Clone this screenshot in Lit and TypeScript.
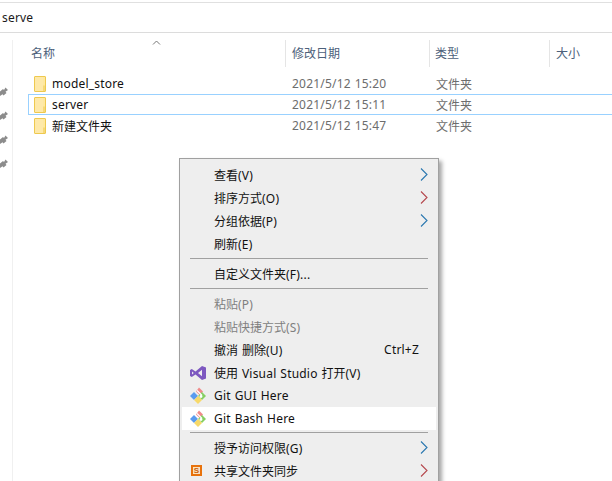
import { LitElement, html, css, svg } from "lit";
import { customElement } from "lit/decorators.js";

const folder = html`<svg class="folder" width="12" height="16" viewBox="0 0 12 16">
  <rect x="0.5" y="0.5" width="11" height="15" rx="0.5" fill="#ffe89e" stroke="#eec94f"/>
  <rect x="1" y="1" width="8" height="14" fill="#fee9a9"/>
  <path d="M10 9.5V15" stroke="#eec94f" fill="none"/>
</svg>`;

const pin = html`<svg class="pin" width="8" height="9" viewBox="0 0 8 9">
  <path d="M0 4.5 L3 2 L4 3 L5.5 0.5 L8 3 L5.5 4.8 L6.5 6 L3.5 8.5 L2.5 7.2 L0 9Z" fill="#8c8c8c"/>
</svg>`;

const vs = svg`<svg width="18" height="18" viewBox="0 0 18 18">
  <path d="M13 2 L17 3.5 V14.5 L13 16 L6.5 10.5 L2.8 13 L1 12 V6 L2.8 5 L6.5 7.5Z M13 5.8 L9 9 L13 12.2Z M3 7.5 V10.5 L4.8 9Z" fill="#7d58c0" fill-rule="evenodd"/>
</svg>`;

const git = svg`<svg width="18" height="18" viewBox="0 0 18 18">
  <path d="M5 5 L9 9 L5 13 L1 9Z" fill="#5a9bee"/>
  <path d="M9 1 L13 5 L10 9 L6 5Z" fill="#f08a8a" transform="translate(1 -0.5)"/>
  <path d="M13 5 L17 9 L13 13 L9 9Z" fill="#86cf62"/>
  <path d="M9 9 L13 13 L9 17 L5 13Z" fill="#f7d96a"/>
  <path d="M8 3.5 L13 8.5" stroke="#fff" stroke-width="1.2"/>
  <circle cx="12" cy="9.5" r="1.4" fill="#fff"/>
</svg>`;

type Item = {
  label?: string;
  sep?: boolean;
  tight?: boolean;
  off?: boolean;
  hot?: boolean;
  arrow?: string;
  key?: string;
  icon?: unknown;
};

const items: Item[] = [
  { label: "查看(V)", arrow: "#2b78b0" },
  { label: "排序方式(O)", arrow: "#b5484e" },
  { label: "分组依据(P)", arrow: "#2b78b0" },
  { label: "刷新(E)" },
  { sep: true },
  { label: "自定义文件夹(F)..." },
  { sep: true },
  { label: "粘贴(P)", off: true },
  { label: "粘贴快捷方式(S)", off: true },
  { label: "撤消 删除(U)", key: "Ctrl+Z" },
  { label: "使用 Visual Studio 打开(V)", icon: vs },
  { label: "Git GUI Here", icon: git },
  { label: "Git Bash Here", icon: git, hot: true },
  { sep: true, tight: true },
  { label: "授予访问权限(G)", arrow: "#2b78b0" },
  {
    label: "共享文件夹同步",
    arrow: "#b5484e",
    icon: html`<span class="sync">S</span>`,
  },
];

const rows = [
  { name: "model_store", date: "2021/5/12 15:20" },
  { name: "server", date: "2021/5/12 15:11", sel: true },
  { name: "新建文件夹", date: "2021/5/12 15:47" },
];

/* Latin runs are set slightly wider, as the reference's UI font is. */
const t = (s: string) =>
  s
    .split(/([\x00-\x7f]+)/)
    .filter(Boolean)
    .map((p) =>
      /^[\x00-\x7f]/.test(p) ? html`<span class="lat">${p}</span>` : p
    );

@customElement("app-root")
export class AppRoot extends LitElement {
  static styles = css`
    :host {
      display: block;
      position: relative;
      width: 612px;
      height: 481px;
      overflow: hidden;
      background: #fff;
      font-family: "Noto Sans", "Noto Sans CJK SC", sans-serif;
      font-size: 12px;
      color: #1a1a1a;
    }
    .lat {
      letter-spacing: 0.2px;
      word-spacing: 0.6px;
    }
    .address {
      margin-top: 2px;
      height: 29px;
      border-top: 1px solid #e0e0e0;
      border-bottom: 1px solid #dcdcdc;
      padding-left: 2px;
      display: flex;
      align-items: center;
      font-size: 12px;
    }
    .body {
      display: flex;
      padding-top: 7px;
    }
    .side {
      width: 13px;
      height: 441px;
      border-right: 1px solid #f0f0f0;
      display: flex;
      flex-direction: column;
      gap: 15px;
      padding-top: 47px;
      box-sizing: border-box;
      overflow: hidden;
    }
    .pin {
      display: block;
      flex: none;
    }
    .list {
      flex: 1;
      padding-left: 15px;
      position: relative;
    }
    .head {
      display: grid;
      grid-template-columns: 258px 144px 120px 1fr;
      height: 27px;
    }
    .head div {
      border-right: 1px solid #e5e5e5;
      padding-left: 3px;
      padding-bottom: 2px;
      display: flex;
      align-items: center;
      color: #4c607a;
    }
    .head div + div {
      padding-left: 6px;
    }
    .head div:nth-child(3) {
      padding-left: 5px;
    }
    .head div:last-child {
      border-right: none;
    }
    .sort {
      position: absolute;
      left: 139px;
      top: 0;
    }
    .rows {
      padding-top: 6px;
    }
    .row {
      display: grid;
      grid-template-columns: 258px 144px 120px 1fr;
      height: 21px;
      box-sizing: border-box;
      align-items: center;
      border: 1px solid transparent;
      border-right: none;
    }
    .row.sel {
      border-color: #99d1ff;
    }
    .name {
      display: flex;
      align-items: center;
      gap: 6px;
      padding-left: 5px;
      color: #111;
      white-space: nowrap;
    }
    .folder {
      flex: none;
    }
    .date,
    .type {
      color: #6d6d6d;
      padding-left: 5px;
    }
    .menu {
      position: absolute;
      left: 179px;
      top: 158px;
      width: 260px;
      box-sizing: border-box;
      background: #eeeeee;
      border: 1px solid #a0a0a0;
      padding: 4px 2px 0;
      box-shadow: 3px 3px 4px rgba(0, 0, 0, 0.35);
    }
    .item {
      display: flex;
      align-items: center;
      height: 23px;
      white-space: nowrap;
      color: #111;
    }
    .item.hot {
      background: #fff;
    }
    .item.off {
      color: #7f7f7f;
    }
    .ic {
      width: 32px;
      padding-left: 7px;
      box-sizing: border-box;
      flex: none;
      display: flex;
      align-items: center;
    }
    .label {
      flex: 1;
    }
    .key {
      margin-right: 17px;
    }
    .arrow {
      margin-right: 8px;
      flex: none;
    }
    .sep {
      height: 1px;
      margin: 3px 8px 3px 8px;
      background: #a0a0a0;
    }
    .sep.tight {
      margin-top: 2px;
    }
    .sync {
      display: block;
      width: 11px;
      height: 11px;
      margin-left: 2px;
      box-sizing: border-box;
      border: 2px solid #e8720c;
      background: #fbe3c0;
      color: #c95f0a;
      font-family: "Liberation Sans", sans-serif;
      font-size: 8px;
      font-weight: 700;
      line-height: 7px;
      text-align: center;
    }
  `;

  render() {
    return html`
      <div class="address">${t("serve")}</div>
      <div class="body">
        <div class="side">${[0, 1, 2, 3].map(() => pin)}</div>
        <div class="list">
          <svg class="sort" width="9" height="5" viewBox="0 0 9 5">
            <path d="M1 4.5 L4.5 1 L8 4.5" fill="none" stroke="#777"/>
          </svg>
          <div class="head">
            <div>名称</div>
            <div>修改日期</div>
            <div>类型</div>
            <div>大小</div>
          </div>
          <div class="rows">
            ${rows.map(
              (r) => html`<div class="row ${r.sel ? "sel" : ""}">
                <div class="name">${folder}<span>${t(r.name)}</span></div>
                <div class="date">${t(r.date)}</div>
                <div class="type">文件夹</div>
                <div></div>
              </div>`
            )}
          </div>
        </div>
      </div>
      <div class="menu">
        ${items.map((it) =>
          it.sep
            ? html`<div class="sep ${it.tight ? "tight" : ""}"></div>`
            : html`<div class="item ${it.off ? "off" : ""} ${it.hot ? "hot" : ""}">
                <span class="ic">${it.icon ?? ""}</span>
                <span class="label">${t(it.label ?? "")}</span>
                ${it.key ? html`<span class="key">${t(it.key)}</span>` : ""}
                ${it.arrow
                  ? html`<svg class="arrow" width="8" height="13" viewBox="0 0 8 13">
                      <path d="M1 0.5 L7 6.5 L1 12.5" fill="none" stroke=${it.arrow} stroke-width="1.1"/>
                    </svg>`
                  : ""}
              </div>`
        )}
      </div>
    `;
  }
}
